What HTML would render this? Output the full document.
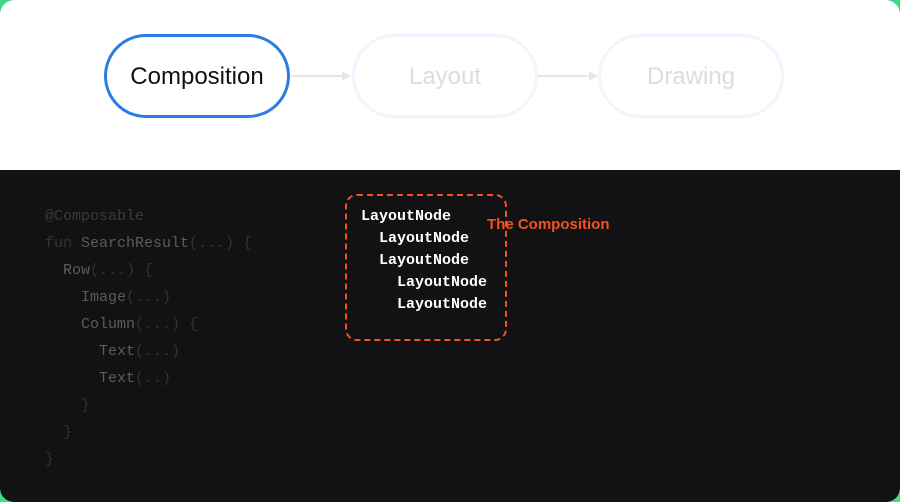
<!DOCTYPE html>
<html><head><style>
html,body{margin:0;padding:0;background:#3ddc84;}
.wrap{width:900px;height:502px;position:relative;overflow:hidden;border-radius:14px;background:#121214;}
.top{position:absolute;left:0;top:0;width:900px;height:170px;background:#fff;}
.pill{position:absolute;top:34px;height:84px;width:186px;box-sizing:border-box;border-radius:42px;font-family:"Liberation Sans",sans-serif;font-size:24px;display:flex;align-items:center;justify-content:center;padding-top:2px;}
.p1{left:104px;border:3px solid #2b7de3;color:#111;}
.p2{left:352px;border:3px solid #f0f6ff;color:#dcdcdc;}
.p3{left:598px;border:3px solid #f0f6ff;color:#dcdcdc;}
.arr{position:absolute;top:75px;height:2px;background:#e6e6e6;}
.head{position:absolute;top:71px;width:0;height:0;border-left:9px solid #e6e6e6;border-top:5px solid transparent;border-bottom:5px solid transparent;}
.code{position:absolute;left:45px;font-family:"Liberation Mono",monospace;font-size:15px;color:#5c5c5c;white-space:pre;line-height:18px;}
.code span{color:#333;}
.ln{position:absolute;font-family:"Liberation Mono",monospace;font-weight:bold;font-size:15px;color:#fff;line-height:18px;}
.box{position:absolute;left:345px;top:194px;width:162px;height:147px;box-sizing:border-box;border:2px dashed #f4511e;border-radius:12px;}
.lab{position:absolute;left:487px;top:216px;font-family:"Liberation Sans",sans-serif;font-weight:bold;font-size:15px;color:#f4511e;}
</style></head><body>
<div class="wrap">
<div class="top">
<div class="pill p1">Composition</div>
<div class="arr" style="left:291px;width:52px"></div><div class="head" style="left:342px"></div>
<div class="pill p2">Layout</div>
<div class="arr" style="left:538px;width:52px"></div><div class="head" style="left:589px"></div>
<div class="pill p3">Drawing</div>
</div>
<div class="code" style="top:208px;color:#3a3a3a">@Composable</div>
<div class="code" style="top:235px"><span>fun</span> SearchResult<span>(...) {</span></div>
<div class="code" style="top:262px">  Row<span>(...) {</span></div>
<div class="code" style="top:289px">    Image<span>(...)</span></div>
<div class="code" style="top:316px">    Column<span>(...) {</span></div>
<div class="code" style="top:343px">      Text<span>(...)</span></div>
<div class="code" style="top:370px">      Text<span>(..)</span></div>
<div class="code" style="top:397px"><span>    }</span></div>
<div class="code" style="top:424px"><span>  }</span></div>
<div class="code" style="top:451px"><span>}</span></div>
<div class="box"></div>
<div class="ln" style="left:361px;top:208px">LayoutNode</div>
<div class="ln" style="left:379px;top:230px">LayoutNode</div>
<div class="ln" style="left:379px;top:252px">LayoutNode</div>
<div class="ln" style="left:397px;top:274px">LayoutNode</div>
<div class="ln" style="left:397px;top:296px">LayoutNode</div>
<div class="lab">The Composition</div>
</div>
</body></html>
